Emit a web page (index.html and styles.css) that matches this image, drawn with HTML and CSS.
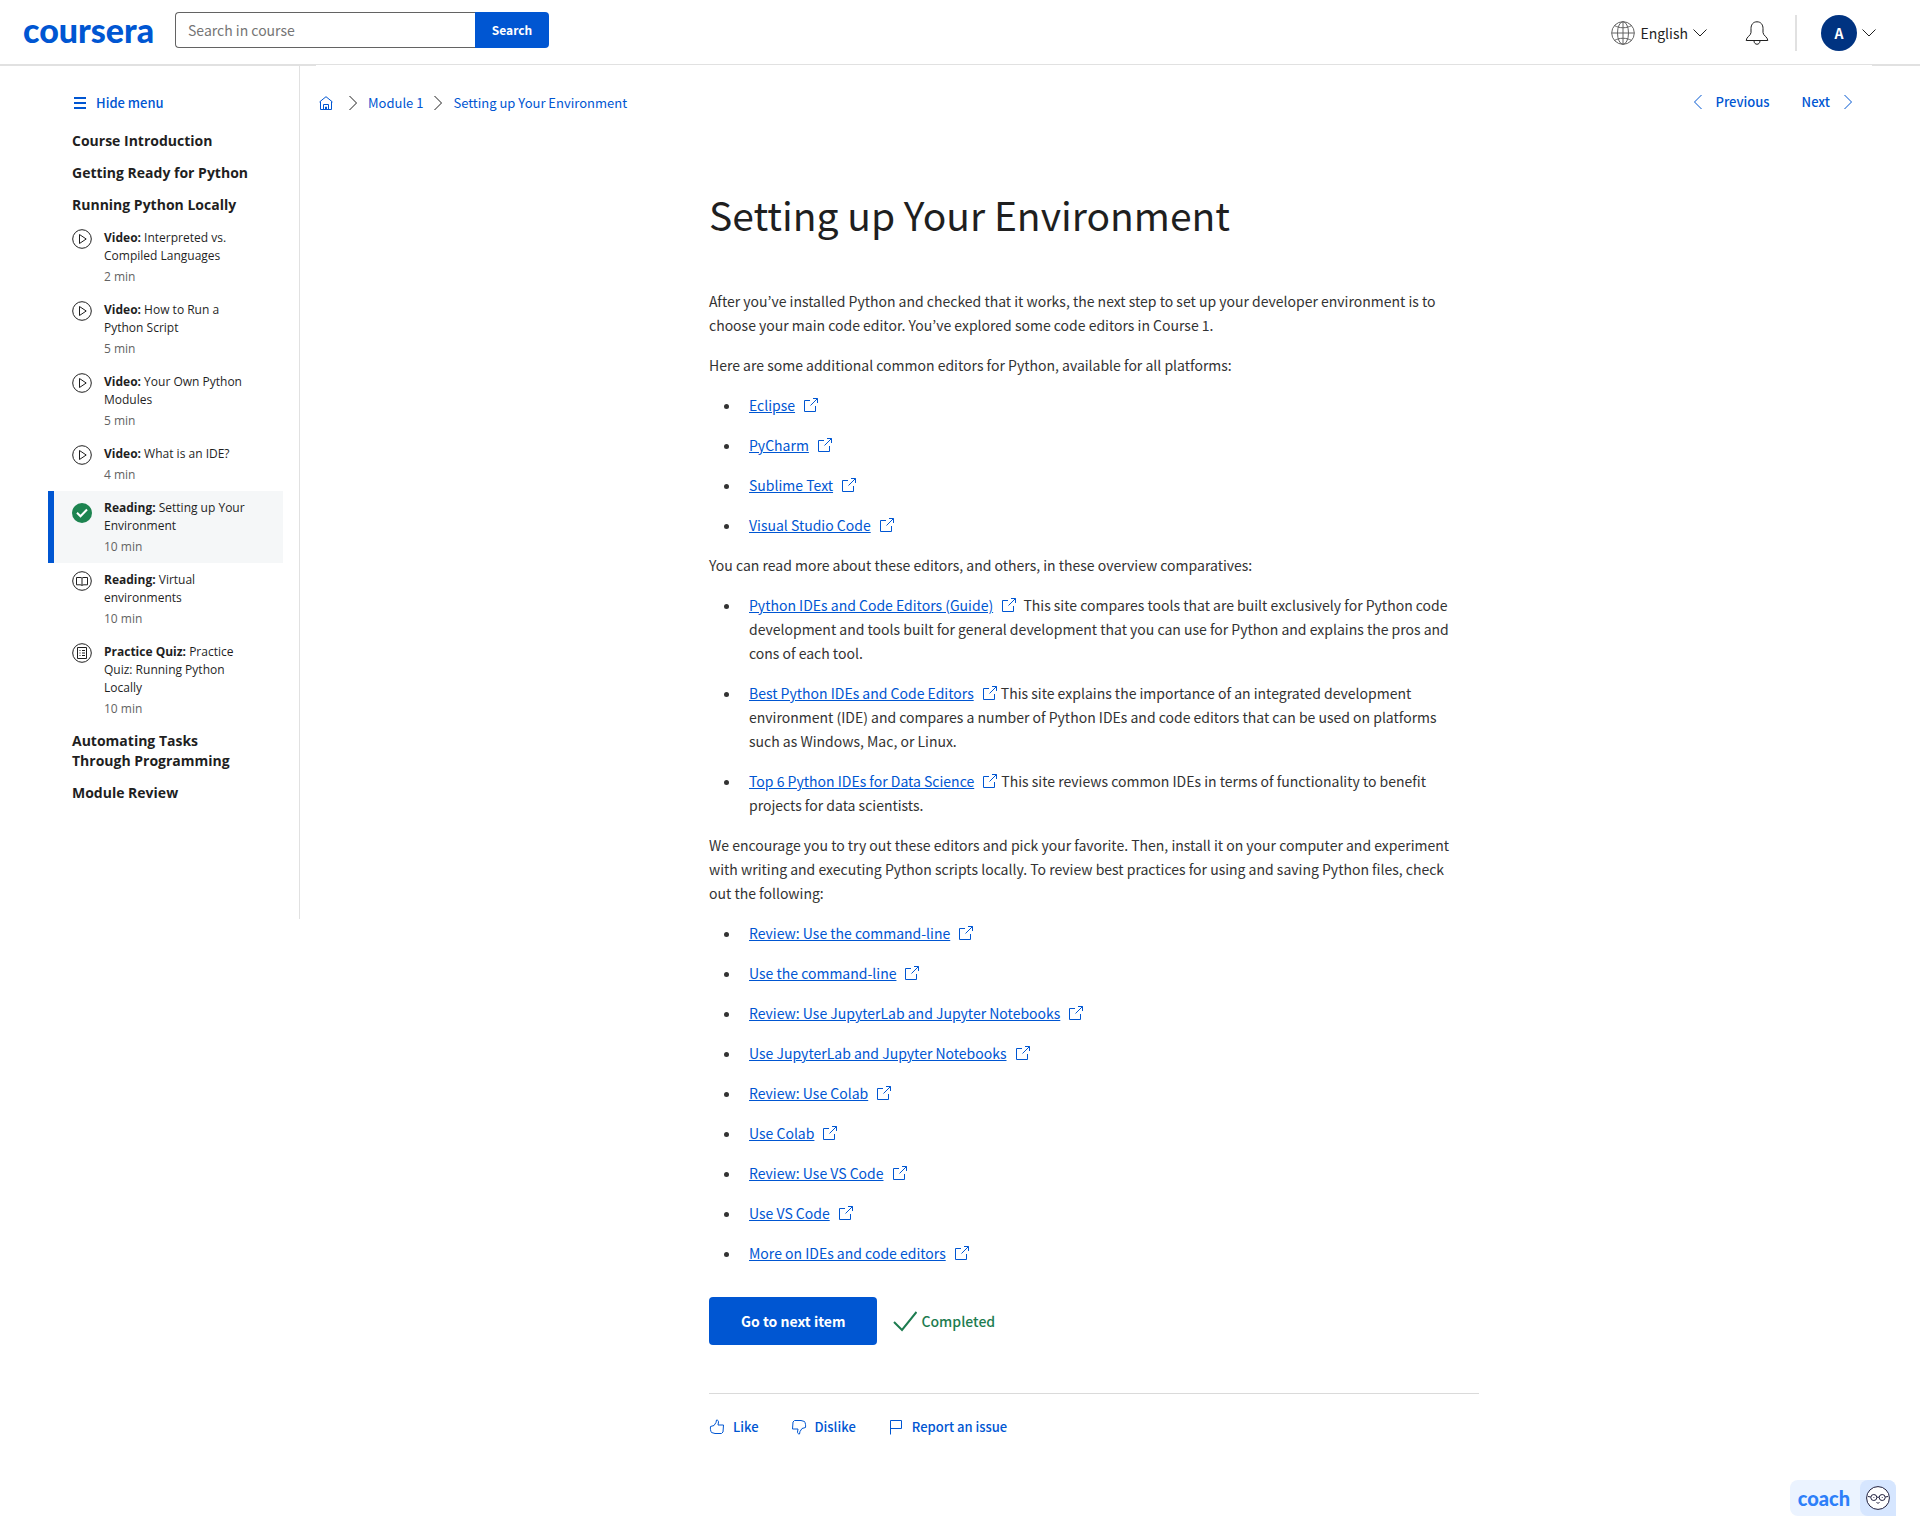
FILE: index.html
```html
<!DOCTYPE html>
<html lang="en">
<head>
<meta charset="utf-8">
<meta name="viewport" content="width=device-width, initial-scale=1">
<title>Setting up Your Environment | Coursera</title>
<link rel="stylesheet" href="styles.css">
</head>
<body>
<svg class="sprite" aria-hidden="true">
  <symbol id="i-ext" viewBox="0 0 16 16"><path d="M7 3.5H1.5v11h11V9M10 1.5h4.5V6M14.5 1.5 7.5 8.5"/></symbol>
  <symbol id="i-right" viewBox="0 0 16 16"><path d="m4.500 1 7 7-7 7"/></symbol>
  <symbol id="i-left" viewBox="0 0 16 16"><path d="m11.500 1-7 7 7 7"/></symbol>
  <symbol id="i-down" viewBox="0 0 14 14"><path d="m.5 3.500 6.500 6.500 6.500-6.500"/></symbol>
  <symbol id="i-play" viewBox="0 0 20 20"><circle cx="10" cy="10" r="9.300"/><path d="M7.500 5.500v9l6.700-4.500z"/></symbol>
  <symbol id="i-book" viewBox="0 0 20 20"><circle cx="10" cy="10" r="9.300"/><path d="M10 7.200C9.500 6.500 8.800 6.500 8 6.500H4.500v7.300H8c1 0 1.600.2 2 .8.400-.6 1-.8 2-.8h3.500V6.500H12c-.8 0-1.500 0-2 .700zv7.400"/></symbol>
  <symbol id="i-quiz" viewBox="0 0 20 20"><circle cx="10" cy="10" r="9.300"/><path d="M5.500 4.500h9v11h-9zM7.500 7.500h1M10 7.500h3M7.500 10h1M10 10h3M7.500 12.500h1M10 12.500h3"/></symbol>
</svg>

<header class="top">
  <a class="logo" href="#">coursera</a>
  <form class="search">
    <input class="search-box" type="text" placeholder="Search in course" aria-label="Search in course">
    <button class="search-btn" type="submit">Search</button>
  </form>
  <div class="tools">
    <button class="plain lang" type="button">
      <svg class="icon-24 globe" viewBox="0 0 24 24"><circle cx="12" cy="12" r="11.300"/><ellipse cx="12" cy="12" rx="5.500" ry="11.300"/><path d="M.7 12h22.600M12 .7v22.600M3.500 4.500c4.500 3 12.500 3 17 0M3.500 19.500c4.500-3 12.500-3 17 0"/></svg>
      <span>English</span>
      <svg class="icon-14"><use href="#i-down"/></svg>
    </button>
    <button class="plain bell" type="button" aria-label="Notifications">
      <svg class="icon-24" viewBox="0 0 24 24"><path d="M12 .8C8 .8 6 3.800 6 7.500v4c0 3-4.800 4.500-4.800 8h21.600c0-3.500-4.800-5-4.800-8v-4C18 3.800 16 .8 12 .8zM9 19.800c0 4.600 6 4.600 6 0"/></svg>
    </button>
    <button class="plain account" type="button" aria-label="Account menu">
      <span class="avatar">A</span>
      <svg class="icon-14"><use href="#i-down"/></svg>
    </button>
  </div>
</header>

<div class="page">
  <aside class="side">
    <button class="plain hide-menu" type="button">
      <svg class="burger" viewBox="0 0 12 12"><path d="M0 1h12M0 6h12M0 11h12"/></svg>
      <span>Hide menu</span>
    </button>
    <nav aria-label="Lessons">
      <h2 class="group">Course Introduction</h2>
      <h2 class="group">Getting Ready for Python</h2>
      <h2 class="group">Running Python Locally</h2>
      <a class="item" href="#"><svg class="item-icon"><use href="#i-play"/></svg><span class="item-text"><b>Video:</b> Interpreted vs. Compiled Languages<span class="mins">2 min</span></span></a>
      <a class="item" href="#"><svg class="item-icon"><use href="#i-play"/></svg><span class="item-text"><b>Video:</b> How to Run a Python Script<span class="mins">5 min</span></span></a>
      <a class="item" href="#"><svg class="item-icon"><use href="#i-play"/></svg><span class="item-text"><b>Video:</b> Your Own Python Modules<span class="mins">5 min</span></span></a>
      <a class="item" href="#"><svg class="item-icon"><use href="#i-play"/></svg><span class="item-text"><b>Video:</b> What is an IDE?<span class="mins">4 min</span></span></a>
      <a class="item current" href="#"><svg class="item-icon done" viewBox="0 0 20 20"><circle cx="10" cy="10" r="10"/><path d="m5 9.800 3.500 3.500L15 6.500"/></svg><span class="item-text"><b>Reading:</b> Setting up Your Environment<span class="mins">10 min</span></span></a>
      <a class="item" href="#"><svg class="item-icon"><use href="#i-book"/></svg><span class="item-text"><b>Reading:</b> Virtual environments<span class="mins">10 min</span></span></a>
      <a class="item" href="#"><svg class="item-icon"><use href="#i-quiz"/></svg><span class="item-text"><b>Practice Quiz:</b> Practice Quiz: Running Python Locally<span class="mins">10 min</span></span></a>
      <h2 class="group">Automating Tasks Through Programming</h2>
      <h2 class="group">Module Review</h2>
    </nav>
  </aside>

  <main class="main">
    <div class="bar">
      <nav class="crumbs" aria-label="Breadcrumb">
        <a class="home" href="#" aria-label="Home"><svg class="icon-14" viewBox="0 0 14 14"><path d="M.5 6 7 .7 13.500 6M1.500 5.500v8h11v-8M4.500 13.500v-5h5v5M6.500 13v-2h1v2"/></svg></a>
        <svg class="icon-16"><use href="#i-right"/></svg>
        <a href="#">Module 1</a>
        <svg class="icon-16"><use href="#i-right"/></svg>
        <a href="#">Setting up Your Environment</a>
      </nav>
      <nav class="pager" aria-label="Items">
        <a href="#"><svg class="icon-16"><use href="#i-left"/></svg>Previous</a>
        <a href="#">Next<svg class="icon-16"><use href="#i-right"/></svg></a>
      </nav>
    </div>

    <article class="reading">
      <h1>Setting up Your Environment</h1>
      <p>After you’ve installed Python and checked that it works, the next step to set up your developer environment is to choose your main code editor. You’ve explored some code editors in Course 1.</p>
      <p>Here are some additional common editors for Python, available for all platforms:</p>
      <ul>
        <li><a href="#">Eclipse</a><svg class="ext"><use href="#i-ext"/></svg></li>
        <li><a href="#">PyCharm</a><svg class="ext"><use href="#i-ext"/></svg></li>
        <li><a href="#">Sublime Text</a><svg class="ext"><use href="#i-ext"/></svg></li>
        <li><a href="#">Visual Studio Code</a><svg class="ext"><use href="#i-ext"/></svg></li>
      </ul>
      <p>You can read more about these editors, and others, in these overview comparatives:</p>
      <ul>
        <li><a href="#">Python IDEs and Code Editors (Guide)</a><svg class="ext"><use href="#i-ext"/></svg>&nbsp; This site compares tools that are built exclusively for Python code development and tools built for general development that you can use for Python and explains the pros and cons of each tool.</li>
        <li><a href="#">Best Python IDEs and Code Editors</a><svg class="ext"><use href="#i-ext"/></svg> This site explains the importance of an integrated development environment (IDE) and compares a number of Python IDEs and code editors that can be used on platforms such as Windows, Mac, or Linux.</li>
        <li><a href="#">Top 6 Python IDEs for Data Science</a><svg class="ext"><use href="#i-ext"/></svg> This site reviews common IDEs in terms of functionality to benefit projects for data scientists.</li>
      </ul>
      <p>We encourage you to try out these editors and pick your favorite. Then, install it on your computer and experiment with writing and executing Python scripts locally. To review best practices for using and saving Python files, check out the following:</p>
      <ul>
        <li><a href="#">Review: Use the command-line</a><svg class="ext"><use href="#i-ext"/></svg></li>
        <li><a href="#">Use the command-line</a><svg class="ext"><use href="#i-ext"/></svg></li>
        <li><a href="#">Review: Use JupyterLab and Jupyter Notebooks</a><svg class="ext"><use href="#i-ext"/></svg></li>
        <li><a href="#">Use JupyterLab and Jupyter Notebooks</a><svg class="ext"><use href="#i-ext"/></svg></li>
        <li><a href="#">Review: Use Colab</a><svg class="ext"><use href="#i-ext"/></svg></li>
        <li><a href="#">Use Colab</a><svg class="ext"><use href="#i-ext"/></svg></li>
        <li><a href="#">Review: Use VS Code</a><svg class="ext"><use href="#i-ext"/></svg></li>
        <li><a href="#">Use VS Code</a><svg class="ext"><use href="#i-ext"/></svg></li>
        <li><a href="#">More on IDEs and code editors</a><svg class="ext"><use href="#i-ext"/></svg></li>
      </ul>
      <div class="finish">
        <button class="next-btn" type="button">Go to next item</button>
        <span class="completed"><svg class="icon-24" viewBox="0 0 24 24"><path d="m1 13 8 8L23.500 3"/></svg>Completed</span>
      </div>
      <div class="feedback">
        <button class="plain" type="button"><svg class="icon-16" viewBox="0 0 16 16"><path d="M1.500 7.500 5 6.500l2-3L7.500 1c1.500 0 2 1 2 2L9 6h5.500l-.5 7-1.500 1.500H6L2.500 13.500c-1-1.500-1.300-4-1-6z"/></svg>Like</button>
        <button class="plain" type="button"><svg class="icon-16" viewBox="0 0 16 16"><path d="M14.500 8.500 11 9.500l-2 3-.5 2.500c-1.500 0-2-1-2-2L7 10H1.500L2 3l1.500-1.500H10l3.500 1c1 1.500 1.300 4 1 6z"/></svg>Dislike</button>
        <button class="plain" type="button"><svg class="icon-16" viewBox="0 0 16 16"><path d="M2.500 15.500v-14h11v8h-11"/></svg>Report an issue</button>
      </div>
    </article>
  </main>
</div>

<button class="coach" type="button">
  <span class="coach-name">coach</span>
  <span class="coach-face"><svg class="icon-24" viewBox="0 0 24 24"><circle class="face" cx="12" cy="12" r="11.400"/><circle cx="7.800" cy="11.500" r="3"/><circle cx="16.200" cy="11.500" r="3"/><path d="M10.800 11.200h2.400M4.800 11 2 10.500M19.200 11l2.800-.5M10.500 16.500c1 .8 2 .8 3 0M7.500 11.500h.8M15.800 11.500h.8"/></svg></span>
</button>
</body>
</html>
```
FILE: styles.css
```css
:root {
  --blue: #0056d2;
  --ink: #1f1f1f;
  --line: #e1e1e1;
  --green: #1d7c50;
  --text: "Source Sans Pro", "Noto Sans CJK KR", sans-serif;
}

* { box-sizing: border-box; }

body {
  margin: 0;
  background: #fff;
  color: var(--ink);
  font: 14px/24px var(--text);
}

svg {
  display: block;
  flex: none;
  fill: none;
  stroke: currentColor;
  stroke-width: 1;
}

.sprite { position: absolute; width: 0; height: 0; }
.icon-14 { width: 14px; height: 14px; }
.icon-16 { width: 16px; height: 16px; }
.icon-24 { width: 24px; height: 24px; }

a { color: var(--blue); }

button, input { font: inherit; }

.plain {
  display: flex;
  align-items: center;
  padding: 0;
  border: 0;
  background: none;
  color: inherit;
}

/* Header */
.top {
  display: flex;
  align-items: flex-start;
  height: 66px;
  padding: 12px 44px 0 23px;
  border-bottom: 2px solid var(--line);
}

.logo {
  width: 152px;
  color: var(--blue);
  font: 900 34px/36px Lato, sans-serif;
  text-decoration: none;
}

.search { display: flex; }

.search-box {
  width: 300px;
  height: 36px;
  padding: 0 12px;
  border: 1px solid #636363;
  border-right: 0;
  border-radius: 4px 0 0 4px;
  color: var(--ink);
}

.search-box::placeholder { color: #757575; }

.search-btn {
  width: 74px;
  height: 36px;
  padding: 0;
  border: 0;
  border-radius: 0 4px 4px 0;
  background: var(--blue);
  color: #fff;
  font-size: 12px;
  font-weight: 700;
}

.tools {
  display: flex;
  align-items: center;
  margin: 3px 0 0 auto;
}

.lang { gap: 5px; }
.globe { color: #636363; }
.bell { margin: 0 26px 0 38px; }

.account {
  gap: 5px;
  padding-left: 24px;
  border-left: 2px solid var(--line);
}

.avatar {
  width: 36px;
  border-radius: 50%;
  background: #003381;
  color: #fff;
  font-weight: 700;
  line-height: 36px;
}

/* Page frame */
.page {
  display: flex;
  align-items: flex-start;
}

.side {
  flex: none;
  width: 300px;
  padding: 25px 16px 110px 48px;
  border-right: 1px solid var(--line);
  font-family: "Open Sans", sans-serif;
}

.hide-menu {
  gap: 10px;
  margin: 0 0 10px 26px;
  color: var(--blue);
  font: 500 13px/24px var(--text);
}

.burger { width: 12px; height: 12px; stroke-width: 2; }

.group {
  margin: 0;
  padding: 6px 32px 6px 24px;
  font-size: 14px;
  font-weight: 700;
  line-height: 20px;
}

.item {
  display: flex;
  gap: 12px;
  padding: 8px 28px 7px 18px;
  border-left: 6px solid transparent;
  color: var(--ink);
  font-size: 12px;
  line-height: 18px;
  text-decoration: none;
}

.item b { font-weight: 700; }
.item-icon { width: 20px; height: 20px; }

.mins {
  display: block;
  padding-top: 3px;
  color: #636363;
}

.current {
  border-color: var(--blue);
  background: #f5f7f8;
}

.done { margin-top: 4px; }
.done circle { fill: #1d8450; stroke: none; }
.done path { stroke: #fff; stroke-width: 2; }

.main {
  position: relative;
  flex: 1;
  margin: -1px 48px 0 16px;
  background: #fff;
}

.bar {
  display: flex;
  justify-content: space-between;
  align-items: flex-start;
  padding: 26px 16px 0 3px;
  font-size: 13px;
}

.bar a { text-decoration: none; }

.crumbs {
  display: flex;
  align-items: center;
  gap: 7px;
}

.home { margin-right: 5px; }

.pager {
  display: flex;
  gap: 32px;
  font-weight: 500;
  line-height: 22px;
}

.pager a {
  display: flex;
  align-items: center;
  gap: 10px;
}

/* Reading */
.reading {
  max-width: 770px;
  margin: 0 auto;
  padding-top: 71px;
}

h1 {
  margin: 0 0 47px;
  font-size: 39px;
  font-weight: 400;
  line-height: 56px;
}

.reading p, .reading ul {
  margin: 0 0 16px;
  padding-right: 16px;
}

.reading p, .reading li { color: #333; }
.reading ul { padding-left: 32px; }
.reading li { padding-left: 8px; }
.reading li + li { margin-top: 16px; }

.ext {
  display: inline-block;
  width: 16px;
  height: 16px;
  margin-left: 8px;
  color: var(--blue);
  vertical-align: -2px;
}

.finish {
  display: flex;
  align-items: center;
  gap: 16px;
  padding: 16px 0 48px;
  border-bottom: 1px solid #dadada;
}

.next-btn {
  height: 48px;
  padding: 0 32px;
  border: 0;
  border-radius: 4px;
  background: var(--blue);
  color: #fff;
  font-weight: 700;
}

.completed {
  display: flex;
  align-items: center;
  gap: 4px;
  color: var(--green);
  font-weight: 500;
}

.completed svg { stroke-width: 2; }

.feedback {
  display: flex;
  gap: 32px;
  padding: 21px 0 64px;
  color: var(--blue);
  font-size: 13px;
  font-weight: 500;
}

.feedback .plain { gap: 8px; }

/* Coach launcher, pinned over the page */
.coach {
  position: fixed;
  right: 24px;
  bottom: 24px;
  display: flex;
  padding: 0;
  border: 0;
  border-radius: 8px 8px 0 8px;
  background: #ebf3ff;
}

.coach-name {
  padding: 0 10px 0 8px;
  color: #2d7ff9;
  font: 900 20px/36px Lato, sans-serif;
}

.coach-face {
  padding: 6px;
  border-radius: 8px 8px 0 8px;
  background: #d6e6ff;
  color: #1f1f3d;
}

.face { fill: #fff; }
```
